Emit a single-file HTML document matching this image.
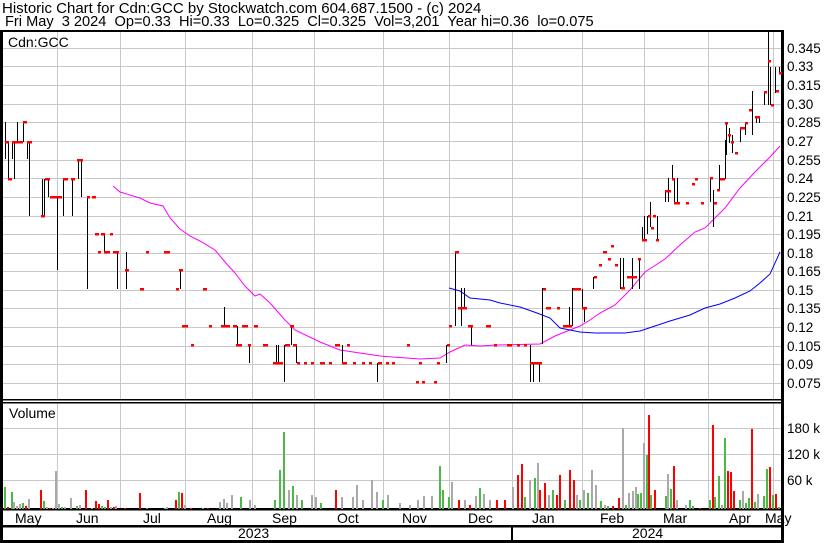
<!DOCTYPE html>
<html><head><meta charset="utf-8"><style>
html,body{margin:0;padding:0;background:#fff;}
svg{display:block;font-family:"Liberation Sans",sans-serif;}
</style></head><body>
<svg width="830" height="543" viewBox="0 0 830 543" xmlns="http://www.w3.org/2000/svg" shape-rendering="crispEdges">
<rect width="830" height="543" fill="#fff"/>
<!-- header -->
<text x="2" y="13" font-size="15">Historic Chart for Cdn:GCC by Stockwatch.com 604.687.1500 - (c) 2024</text>
<text x="5" y="26" font-size="14.6" xml:space="preserve">Fri May  3 2024  Op=0.33  Hi=0.33  Lo=0.325  Cl=0.325  Vol=3,201  Year hi=0.36  lo=0.075</text>
<!-- grid -->
<g stroke="#c8c8c8" stroke-width="1">
<path d="M3 48.5H782M3 66.5H782M3 85.5H782M3 104.5H782M3 122.5H782M3 141.5H782M3 160.5H782M3 178.5H782M3 197.5H782M3 216.5H782M3 234.5H782M3 253.5H782M3 271.5H782M3 290.5H782M3 308.5H782M3 327.5H782M3 346.5H782M3 364.5H782M3 383.5H782"/>
<path d="M3 428.5H782M3 454.5H782M3 480.5H782"/>
<path d="M57.5 32V400M120.5 32V400M185.5 32V400M252.5 32V400M314.5 32V400M383.5 32V400M449.5 32V400M512.5 32V400M582.5 32V400M644.5 32V400M708.5 32V400M773.5 32V400"/>
<path d="M57.5 403V509M120.5 403V509M185.5 403V509M252.5 403V509M314.5 403V509M383.5 403V509M449.5 403V509M512.5 403V509M582.5 403V509M644.5 403V509M708.5 403V509M773.5 403V509"/>
</g>
<!-- frame -->
<g fill="#000">
<rect x="0" y="30" width="784" height="2"/>
<rect x="0" y="30" width="3" height="513"/>
<rect x="781" y="30" width="3" height="513"/>
<rect x="0" y="399" width="784" height="1.5"/>
<rect x="0" y="402" width="784" height="1.5"/>
<rect x="0" y="508" width="784" height="2.5"/>
<rect x="0" y="525" width="784" height="2.5"/>
<rect x="0" y="540" width="784" height="3"/>
<rect x="511" y="527" width="2" height="14"/>
</g>
<text x="8" y="47" font-size="14">Cdn:GCC</text>
<text x="9" y="418" font-size="14">Volume</text>
<!-- moving averages -->
<g fill="none" stroke-width="1" shape-rendering="auto">
<polyline stroke="#ff00ff" points="113,186 120,192 140,198 150,203 163,206 170,218 180,229 190,236 200,241 215,250 225,262 235,273 245,286 255,296 260,294 270,303 285,320 295,330 320,342 340,350 380,356 420,359 440,358 450,352 465,345 480,346 496,345 540,344 555,336 570,330 580,326 590,320 600,313 615,305 630,290 645,272 665,259 680,245 695,232 705,228 715,218 725,208 740,188 755,172 770,157 780,146"/>
<polyline stroke="#0000ff" points="449,288 460,291 470,298 490,300 500,303 520,307 537,313 550,318 560,328 580,332 595,333 625,333 640,331 655,326 670,321 690,315 705,308 720,304 735,298 750,291 760,283 770,274 780,252"/>
</g>
<!-- price bars -->
<path stroke="#000" stroke-width="1.2" fill="none" d="M5.5 122V159M8.5 142V179M12.5 142V159M14.5 142V179M17.5 122V142M23.5 122V142M27.5 142V159M29.5 142V216M42.5 179V216M44.5 179V216M48.5 179V197M57.5 197V270M63.5 179V216M72.5 179V216M78.5 160V179M81.5 160V197M87.5 197V289M104.5 234V252M117.5 252V289M126.5 252V289M180.5 270V289M224.5 307V326M237.5 326V345M249.5 345V363M276.5 345V363M278.5 345V363M284.5 345V382M291.5 326V345M296.5 345V363M342.5 345V363M377.5 363V382M446.5 345V363M455.5 252V326M461.5 288V326M464.5 288V308M471.5 326V345M530.5 345V382M533.5 363V382M539.5 363V382M542.5 288V344M569.5 307V326M572.5 288V326M582.5 289V308M584.5 308V322M593.5 277V289M620.5 258V289M623.5 258V289M632.5 258V289M639.5 258V289M642.5 227V240M644.5 216V240M647.5 216V234M650.5 202V227M657.5 216V240M665.5 191V202M668.5 178V202M672.5 165V178M674.5 178V202M677.5 178V202M710.5 178V202M713.5 190V227M719.5 165V190M725.5 140V179M726.5 122V155M729.5 128V143M732.5 135V153M740.5 128V142M745.5 123V135M752.5 91V135M756.5 117V123M759.5 117V123M764.5 92V105M768.5 32V105M770.5 67V105M775.5 67V93M779.5 67V73"/>
<path stroke="#ff0000" stroke-width="2.5" fill="none" d="M5 142H9M8 179H12M12 142H15M15 142H23M23 122H27M27 142H32M41 216H45M45 179H50M50 197H62M63 179H68M71 179H75M77 160H83M87 197H90M92 197H96M95 234H99M98 252H101M101 234H105M104 252H110M110 234H113M113 252H119M125 270H129M140 289H144M146 252H149M164 252H170M176 289H179M179 270H183M182 326H188M191 345H194M203 289H207M209 326H212M221 326H230M233 326H237M236 345H242M242 326H248M248 345H251M254 326H258M263 345H268M273 363H283M285 345H290M290 326H294M293 345H297M297 363H300M304 363H307M311 363H314M320 363H325M329 363H332M335 345H340M342 363H347M347 345H350M353 363H356M362 363H365M369 363H372M378 363H382M386 363H389M392 363H395M407 345H410M416 382H419M422 382H425M419 363H422M434 382H437M437 363H440M447 345H450M449 326H452M455 252H459M458 308H467M468 326H473M486 326H491M494 345H497M507 345H512M517 345H520M524 345H527M530 363H542M543 289H546M546 308H551M557 308H560M563 326H572M573 289H581M582 308H587M594 277H597M599 265H602M603 252H607M608 259H611M611 246H614M615 265H618M621 288H625M627 277H637M638 259H641M642 240H647M648 216H651M651 228H654M653 216H656M656 240H659M665 191H671M672 179H675M674 203H680M686 203H689M692 184H695M695 179H698M701 203H704M710 178H713M714 203H717M717 190H720M720 179H725M725 123H728M728 135H731M731 142H734M735 153H738M740 128H745M745 123H748M749 110H752M755 117H760M764 92H767M768 61H771M771 105H774M776 91H779M779 73H782"/>
<!-- volume bars -->
<g shape-rendering="crispEdges">
<path stroke="#4cb848" stroke-width="2" fill="none" d="M5 509V487M12 509V492M23 509V503M44 509V501M62 509V507M77 509V506M102 509V506M105 509V507M147 509V508M179 509V492M203 509V508M241 509V497M275 509V500M280 509V470M284 509V432M293 509V486M302 509V500M321 509V503M383 509V500M440 509V466M443 509V490M449 509V497M480 509V488M525 509V497M535 509V478M553 509V490M565 509V500M580 509V500M588 509V493M601 509V501M608 509V506M626 509V505M638 509V494M641 509V493M647 509V455M651 509V495M666 509V496M671 509V489M690 509V500M693 509V506M710 509V500M715 509V497M719 509V476M725 509V438M740 509V500M746 509V503M749 509V498M755 509V502M764 509V496M767 509V469M773 509V495M779 509V507"/>
<path stroke="#ff0000" stroke-width="2" fill="none" d="M8 509V507M26 509V506M41 509V490M50 509V508M86 509V490M96 509V501M99 509V504M108 509V500M114 509V507M125 509V508M140 509V493M176 509V500M182 509V493M191 509V508M208 509V508M336 509V490M459 509V500M470 509V505M497 509V500M505 509V500M518 509V475M522 509V464M540 509V490M545 509V483M557 509V495M560 509V475M570 509V470M574 509V480M613 509V506M619 509V498M649 509V415M655 509V490M674 509V466M700 509V508M713 509V425M728 509V471M731 509V472M734 509V491M752 509V429M770 509V467M776 509V494"/>
<path stroke="#a9a9a9" stroke-width="2" fill="none" d="M14 509V502M17 509V506M20 509V504M29 509V499M47 509V507M53 509V508M56 509V471M59 509V504M65 509V507M71 509V498M80 509V505M92 509V508M111 509V507M116 509V506M165 509V508M167 509V507M185 509V505M220 509V502M224 509V499M227 509V503M232 509V495M250 509V500M255 509V505M289 509V490M297 509V495M312 509V495M316 509V497M342 509V497M353 509V497M357 509V485M363 509V500M372 509V480M377 509V492M388 509V495M400 509V503M410 509V505M418 509V500M424 509V496M432 509V496M452 509V482M465 509V500M476 509V496M484 509V494M490 509V500M513 509V487M530 509V480M538 509V463M549 509V495M577 509V495M584 509V490M592 509V470M596 509V485M605 509V505M623 509V428M629 509V493M633 509V491M636 509V487M644 509V443M668 509V474M677 509V500M686 509V505M722 509V505M743 509V491M758 509V494"/>
</g>
<!-- right axis labels -->
<g font-size="13.5" fill="#000">
<text x="787" y="53">0.345</text><text x="787" y="71">0.33</text><text x="787" y="90">0.315</text><text x="787" y="109">0.30</text><text x="787" y="127">0.285</text><text x="787" y="146">0.27</text><text x="787" y="165">0.255</text><text x="787" y="183">0.24</text><text x="787" y="202">0.225</text><text x="787" y="221">0.21</text><text x="787" y="239">0.195</text><text x="787" y="258">0.18</text><text x="787" y="276">0.165</text><text x="787" y="295">0.15</text><text x="787" y="313">0.135</text><text x="787" y="332">0.12</text><text x="787" y="351">0.105</text><text x="787" y="369">0.09</text><text x="787" y="388">0.075</text>
<text x="787" y="433">180 k</text><text x="787" y="459">120 k</text><text x="787" y="485">60 k</text>
</g>
<!-- month labels -->
<g font-size="14" fill="#000">
<text x="15" y="523">May</text><text x="76" y="523">Jun</text><text x="143" y="523">Jul</text><text x="207" y="523">Aug</text><text x="272" y="523">Sep</text><text x="337" y="523">Oct</text><text x="402" y="523">Nov</text><text x="468" y="523">Dec</text><text x="532" y="523">Jan</text><text x="600" y="523">Feb</text><text x="663" y="523">Mar</text><text x="729" y="523">Apr</text><text x="765" y="523">May</text>
<text x="238" y="538">2023</text><text x="632" y="538">2024</text>
</g>
</svg>
</body></html>
